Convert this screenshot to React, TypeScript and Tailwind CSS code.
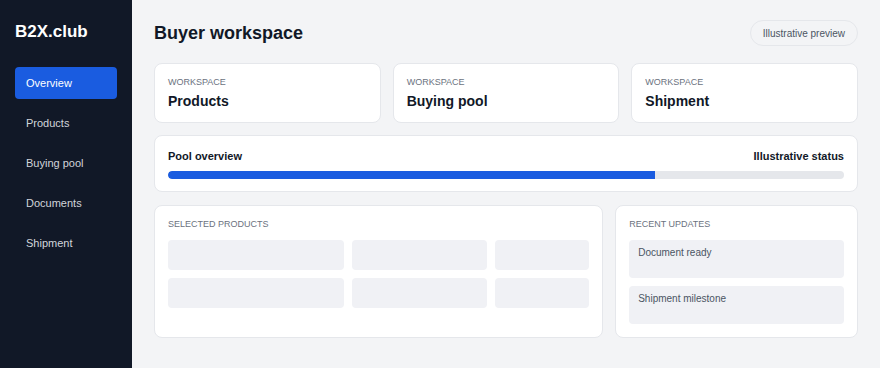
import React from "react";

const nav = ["Overview", "Products", "Buying pool", "Documents", "Shipment"];
const workspaces = ["Products", "Buying pool", "Shipment"];
const updates = ["Document ready", "Shipment milestone"];

export default function App() {
  return (
    <div className="flex h-[368px] w-[880px] bg-[#f3f4f6] font-['Liberation_Sans',Arial,sans-serif] text-[#111827]">
      <aside className="w-[132px] shrink-0 bg-[#111827] px-[15px] pt-[21px]">
        <div className="text-[17px] font-bold leading-[22px] text-white">B2X.club</div>
        <nav className="mt-[24px] flex flex-col gap-[8px]">
          {nav.map((item, i) => (
            <div
              key={item}
              className={
                i === 0
                  ? "flex h-[32px] items-center rounded-[4px] bg-[#1a5ce0] px-[11px] text-[11px] text-white"
                  : "flex h-[32px] items-center rounded-[4px] px-[11px] text-[11px] text-[#d1d5db]"
              }
            >
              {item}
            </div>
          ))}
        </nav>
      </aside>

      <main className="flex-1 px-[22px] pt-[20px]">
        <div className="flex h-[26px] items-center justify-between">
          <h1 className="text-[18px] font-bold leading-none">Buyer workspace</h1>
          <span className="flex h-[26px] items-center rounded-full border border-[#e5e7eb] px-[12px] text-[10px] text-[#4b5563]">
            Illustrative preview
          </span>
        </div>

        <div className="mt-[17px] grid grid-cols-3 gap-[12px]">
          {workspaces.map((w) => (
            <div key={w} className="h-[60px] rounded-[8px] border border-[#e5e7eb] bg-white px-[13px] pt-[12px]">
              <div className="text-[9px] leading-[12px] text-[#6b7280]">WORKSPACE</div>
              <div className="mt-[5px] text-[14px] font-bold leading-[17px]">{w}</div>
            </div>
          ))}
        </div>

        <div className="mt-[12px] h-[57px] rounded-[8px] border border-[#e5e7eb] bg-white px-[13px] pt-[13px]">
          <div className="flex justify-between text-[11px] font-bold leading-[14px]">
            <span>Pool overview</span>
            <span>Illustrative status</span>
          </div>
          <div className="mt-[8px] h-[8px] overflow-hidden rounded-full bg-[#e5e7eb]">
            <div className="h-full w-[72%] rounded-l-full bg-[#1a5ce0]" />
          </div>
        </div>

        <div className="mt-[13px] grid grid-cols-[1.85fr_1fr] gap-[12px]">
          <div className="rounded-[8px] border border-[#e5e7eb] bg-white px-[13px] pt-[12px]">
            <div className="text-[9px] leading-[12px] text-[#6b7280]">SELECTED PRODUCTS</div>
            <div className="mt-[10px] grid grid-cols-[1.3fr_1fr_0.7fr] gap-[8px]">
              {Array.from({ length: 6 }).map((_, i) => (
                <div key={i} className="h-[30px] rounded-[4px] bg-[#f0f1f5]" />
              ))}
            </div>
          </div>
          <div className="rounded-[8px] border border-[#e5e7eb] bg-white px-[13px] pb-[13px] pt-[12px]">
            <div className="text-[9px] leading-[12px] text-[#6b7280]">RECENT UPDATES</div>
            <div className="mt-[10px] flex flex-col gap-[8px]">
              {updates.map((u) => (
                <div key={u} className="h-[38px] rounded-[4px] bg-[#f0f1f5] px-[9px] pt-[7px] text-[10px] leading-[12px] text-[#4b5563]">
                  {u}
                </div>
              ))}
            </div>
          </div>
        </div>
      </main>
    </div>
  );
}
